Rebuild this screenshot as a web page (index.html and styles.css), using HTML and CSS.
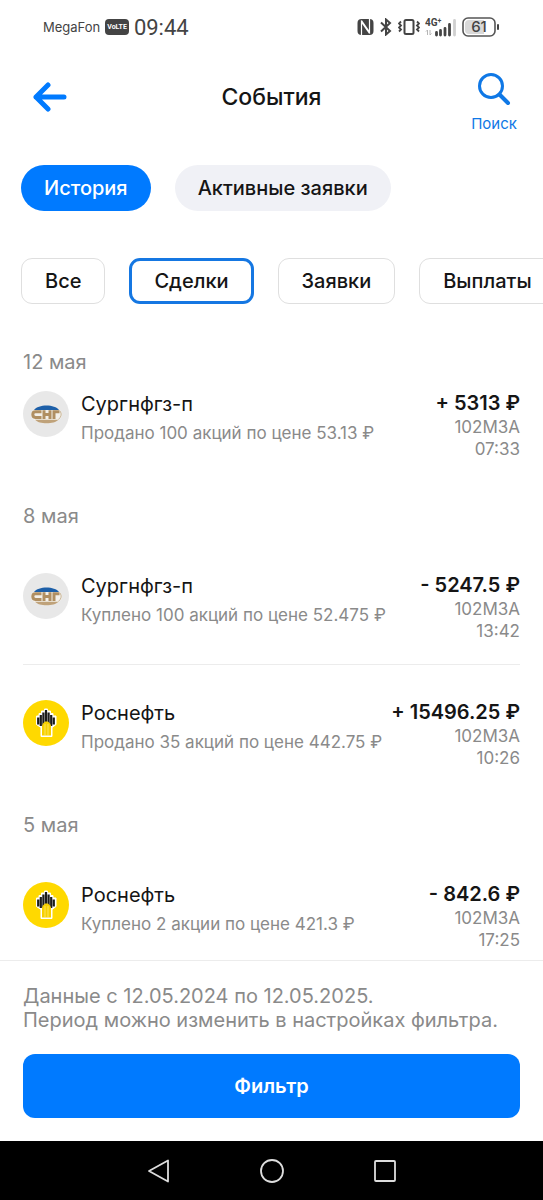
FILE: index.html
```html
<!DOCTYPE html>
<html lang="ru">
<head>
  <meta charset="UTF-8" />
  <meta name="viewport" content="width=device-width, initial-scale=1" />
  <title>События</title>
  <link rel="stylesheet" href="styles.css">
</head>
<body>
  <!-- shared logos -->
  <svg class="sprite" aria-hidden="true">
    <symbol id="logo-sng" viewBox="0 0 46 46">
      <circle cx="23" cy="23" r="23" fill="#e8e8e8"/>
      <ellipse cx="23.500" cy="23.500" rx="15.500" ry="9" fill="#f3f0ea"/>
      <path d="M11 19C15 13 32 13 36 19Z" fill="#1d5fa8"/>
      <path d="M12 28.800H35.500C31 33.500 16 33.500 12 28.800Z" fill="#bfa27a"/>
      <path d="M18.500 20.700H12.500Q9.800 20.700 9.800 23.500T12.500 26.500H18.500M21 19.200V28M27 19.200V28M21 23.500H27M31 28V20.700H36.500" fill="none" stroke="#b08f62" stroke-width="3"/>
      <path d="M37 20Q40 24 35.500 28.500" fill="none" stroke="#c9b698" stroke-width="1"/>
    </symbol>
    <symbol id="logo-rosneft" viewBox="0 0 46 46">
      <circle cx="23" cy="23" r="23" fill="#ffd900"/>
      <path d="M21.500 9H24.500V11H27.500V13.500H30V16H33V24.500L29 27.500V36.500H18V27.500L13.500 24.500V16H16V13.500H18.500V11H21.500Z" fill="#fff" stroke="#fff" stroke-width="1"/>
      <path d="M15.200 17.500V24.500M17.800 15V26M20.400 12.500V26M23 10V26M25.600 12.500V26M28.200 15V26M30.800 17.500V24.500" fill="none" stroke="#1d1d1b" stroke-width="2.200"/>
      <path d="M19 25.500L20 23.500L22 21.500H25L27 23.500L28 25.500V35.500H19Z" fill="#f7d000"/>
      <path d="M22 24V35.500M25 24V35.500" stroke="#fff2a0" stroke-width=".6"/>
    </symbol>
  </svg>

  <div class="app">
    <div class="status-bar">
      <div class="status-left">
        <span class="carrier">MegaFon</span>
        <span class="volte">VoLTE</span>
        <span class="clock">09:44</span>
      </div>
      <div class="status-right">
        <svg width="17" height="18" viewBox="0 0 17 18" aria-hidden="true">
          <rect x=".5" y="1" width="16" height="16" rx="4" fill="#444"/>
          <path d="M4.500 17V4L12.500 15.500M12.500 1V14L4.500 2.500" fill="none" stroke="#fff" stroke-width="1.200"/>
        </svg>
        <svg width="14" height="18" viewBox="0 0 14 18" aria-hidden="true">
          <path d="M2 4.500L11 13L7 16.500V1.500L11 5L2 13.500" fill="none" stroke="#444" stroke-width="2"/>
        </svg>
        <svg width="22" height="18" viewBox="0 0 22 18" aria-hidden="true">
          <rect x="6.500" y="2" width="9" height="14" rx="1.500" fill="none" stroke="#444" stroke-width="2"/>
          <path d="M3 3.500L1 5.500L3 7.500L1 9.500L3 11.500L1 13.500M19 3.500L21 5.500L19 7.500L21 9.500L19 11.500L21 13.500" fill="none" stroke="#444" stroke-width="1.800"/>
        </svg>
        <svg width="32" height="20" viewBox="0 0 32 20" aria-hidden="true">
          <text class="signal-text" x="0" y="9">4G<tspan dy="-3" font-size="7">+</tspan></text>
          <path d="M2.500 18V13L1 14.500M5 13V18L6.500 16.500" fill="none" stroke="#b5b5b5" stroke-width="1"/>
          <path d="M11.500 18V15.500M15.500 18V13.500M20 18V11.500M24.500 18V7.500" stroke="#444" stroke-width="2.800" stroke-linecap="round"/>
          <path d="M29.500 18V3.500" stroke="#d0d0d0" stroke-width="2.800" stroke-linecap="round"/>
        </svg>
        <svg width="38" height="20" viewBox="0 0 38 20" aria-hidden="true">
          <rect x="1" y="1" width="32" height="18" rx="5" fill="#fff" stroke="#555" stroke-width="1.600"/>
          <path d="M7 3H22V17H7Q3 17 3 13V7Q3 3 7 3Z" fill="#d9d9d9"/>
          <path d="M36 8V12" stroke="#444" stroke-width="2" stroke-linecap="round"/>
          <text class="battery-text" x="17" y="15" text-anchor="middle">61</text>
        </svg>
      </div>
    </div>

    <header class="header">
      <button class="back-btn" type="button" aria-label="Назад">
        <svg width="34" height="30" viewBox="0 0 34 30">
          <path d="M31 15H3M15 3L3 15L15 27" fill="none" stroke="#007aff" stroke-width="5" stroke-linecap="round" stroke-linejoin="round"/>
        </svg>
      </button>
      <h1 class="title">События</h1>
      <button class="search-btn" type="button">
        <svg width="34" height="34" viewBox="0 0 34 34" aria-hidden="true">
          <circle cx="14" cy="14" r="11.500" fill="none" stroke="#0f78e6" stroke-width="3"/>
          <path d="M22.500 22.500L31 31" stroke="#0f78e6" stroke-width="4" stroke-linecap="round"/>
        </svg>
        <span>Поиск</span>
      </button>
    </header>

    <nav class="tabs">
      <button class="tab active" type="button">История</button>
      <button class="tab" type="button">Активные заявки</button>
    </nav>

    <div class="chips">
      <button class="chip" type="button">Все</button>
      <button class="chip active" type="button">Сделки</button>
      <button class="chip" type="button">Заявки</button>
      <button class="chip" type="button">Выплаты</button>
    </div>

    <main class="history">
      <section class="day">
        <h2 class="date">12 мая</h2>
        <article class="deal">
          <svg class="logo" aria-hidden="true"><use href="#logo-sng"/></svg>
          <div class="info">
            <div class="name">Сургнфгз-п</div>
            <div class="desc">Продано 100 акций по цене 53.13 ₽</div>
          </div>
          <div class="sum">
            <div class="amount">+ 5313 ₽</div>
            <div>102МЗА</div>
            <div>07:33</div>
          </div>
        </article>
      </section>

      <section class="day">
        <h2 class="date">8 мая</h2>
        <article class="deal">
          <svg class="logo" aria-hidden="true"><use href="#logo-sng"/></svg>
          <div class="info">
            <div class="name">Сургнфгз-п</div>
            <div class="desc">Куплено 100 акций по цене 52.475 ₽</div>
          </div>
          <div class="sum">
            <div class="amount">- 5247.5 ₽</div>
            <div>102МЗА</div>
            <div>13:42</div>
          </div>
        </article>
        <article class="deal">
          <svg class="logo" aria-hidden="true"><use href="#logo-rosneft"/></svg>
          <div class="info">
            <div class="name">Роснефть</div>
            <div class="desc">Продано 35 акций по цене 442.75 ₽</div>
          </div>
          <div class="sum">
            <div class="amount">+ 15496.25 ₽</div>
            <div>102МЗА</div>
            <div>10:26</div>
          </div>
        </article>
      </section>

      <section class="day">
        <h2 class="date">5 мая</h2>
        <article class="deal">
          <svg class="logo" aria-hidden="true"><use href="#logo-rosneft"/></svg>
          <div class="info">
            <div class="name">Роснефть</div>
            <div class="desc">Куплено 2 акции по цене 421.3 ₽</div>
          </div>
          <div class="sum">
            <div class="amount">- 842.6 ₽</div>
            <div>102МЗА</div>
            <div>17:25</div>
          </div>
        </article>
      </section>
    </main>

    <footer class="footer">
      <p class="note">Данные с 12.05.2024 по 12.05.2025.<br>Период можно изменить в настройках фильтра.</p>
      <button class="filter-btn" type="button">Фильтр</button>
    </footer>

    <div class="system-nav">
      <button type="button" aria-label="Назад">
        <svg width="26" height="26" viewBox="0 0 26 26"><path d="M22 2.500V23.500L3 13Z" fill="none" stroke="#ddd" stroke-width="1.800" stroke-linejoin="round"/></svg>
      </button>
      <button type="button" aria-label="Домой">
        <svg width="26" height="26" viewBox="0 0 26 26"><circle cx="13" cy="13" r="11" fill="none" stroke="#ddd" stroke-width="1.800"/></svg>
      </button>
      <button type="button" aria-label="Недавние">
        <svg width="26" height="26" viewBox="0 0 26 26"><rect x="3" y="3" width="20" height="20" rx="1" fill="none" stroke="#ddd" stroke-width="1.800"/></svg>
      </button>
    </div>
  </div>
</body>
</html>
```
FILE: styles.css
```css
* {
  box-sizing: border-box;
}
body {
  margin: 0;
  background: #fff;
  color: #151515;
  font-family: Inter, Roboto, sans-serif;
  font-size: 20px;
}
h1, h2, p {
  margin: 0;
}
button {
  border: none;
  background: none;
  padding: 0;
  color: inherit;
  font: inherit;
  cursor: pointer;
}
svg {
  display: block;
  flex: none;
}
.sprite {
  position: absolute;
  width: 0;
  height: 0;
}

.app {
  display: flex;
  flex-direction: column;
  height: 100vh;
  overflow: hidden;
}

/* status bar */
.status-bar {
  display: flex;
  justify-content: space-between;
  align-items: center;
  height: 54px;
  flex: none;
  padding: 0 43px;
  color: #444;
}
.status-left,
.status-right {
  display: flex;
  align-items: center;
  gap: 5px;
}
.carrier {
  font-size: 13px;
}
.volte {
  padding: 0 2px;
  border-radius: 4px;
  background: #444;
  color: #fff;
  font: bold 7px/16px Roboto, sans-serif;
}
.clock {
  font-size: 22px;
  font-family: Roboto, sans-serif;
}
.signal-text {
  font: bold 10px Roboto, sans-serif;
  fill: #444;
}
.battery-text {
  font: 500 15px Inter, sans-serif;
  fill: #444;
}

/* header */
.header {
  display: grid;
  grid-template-columns: 80px 1fr 80px;
  align-items: center;
  height: 86px;
  flex: none;
  padding: 0 9px;
}
.back-btn {
  justify-self: start;
  padding: 0 24px;
}
.title {
  text-align: center;
  font-size: 23px;
  font-weight: 500;
}
.search-btn {
  display: flex;
  flex-direction: column;
  align-items: center;
  gap: 9px;
  padding-top: 11px;
  color: #0f78e6;
  font-size: 15px;
  line-height: 18px;
}

/* tabs and chips */
.tabs,
.chips {
  display: flex;
  gap: 24px;
  flex: none;
  padding: 0 21px;
  font-weight: 500;
}
.tabs {
  margin-top: 25px;
}
.tab {
  height: 46px;
  padding: 0 23px;
  border-radius: 23px;
  background: #f0f1f6;
}
.tab.active {
  background: #007aff;
  color: #fff;
}
.chips {
  margin-top: 47px;
  overflow: hidden;
}
.chip {
  flex: none;
  height: 46px;
  padding: 0 23px;
  border: 1px solid #dfdfdf;
  border-radius: 11px;
}
.chip.active {
  padding: 0 22px;
  border: 3px solid #1577e2;
}

/* list of deals */
.history {
  flex: 1;
  min-height: 0;
  overflow: hidden;
  padding: 46px 23px 0;
}
.day {
  margin-bottom: 44px;
}
.date {
  margin-bottom: 45px;
  color: #8a8a8a;
  font-size: 20px;
  font-weight: 400;
  line-height: 24px;
}
.day:first-child .date {
  margin-bottom: 17px;
}
.deal {
  display: flex;
  gap: 12px;
}
.deal + .deal {
  margin-top: 22px;
  padding-top: 35px;
  border-top: 1px solid #ececec;
}
.logo {
  width: 46px;
  height: 46px;
}
.info {
  flex: 1;
  min-width: 0;
  white-space: nowrap;
}
.name {
  color: #151515;
  line-height: 26px;
}
.desc {
  margin-top: 5px;
  color: #8a8a8a;
  font-size: 17px;
  line-height: 22px;
}
.sum {
  color: #8a8a8a;
  font-size: 17px;
  line-height: 22px;
  text-align: right;
  white-space: nowrap;
}
.amount {
  color: #151515;
  font-size: 20px;
  font-weight: 600;
  line-height: 25px;
}

/* footer */
.footer {
  flex: none;
  padding: 23px;
  border-top: 1px solid #ececec;
}
.note {
  margin-bottom: 22px;
  color: #8a8a8a;
  line-height: 24px;
}
.filter-btn {
  display: block;
  width: 100%;
  height: 64px;
  border-radius: 12px;
  background: #007aff;
  color: #fff;
  font-weight: 600;
}

.system-nav {
  display: flex;
  justify-content: center;
  align-items: center;
  gap: 87px;
  height: 59px;
  flex: none;
  background: #000;
}
```
